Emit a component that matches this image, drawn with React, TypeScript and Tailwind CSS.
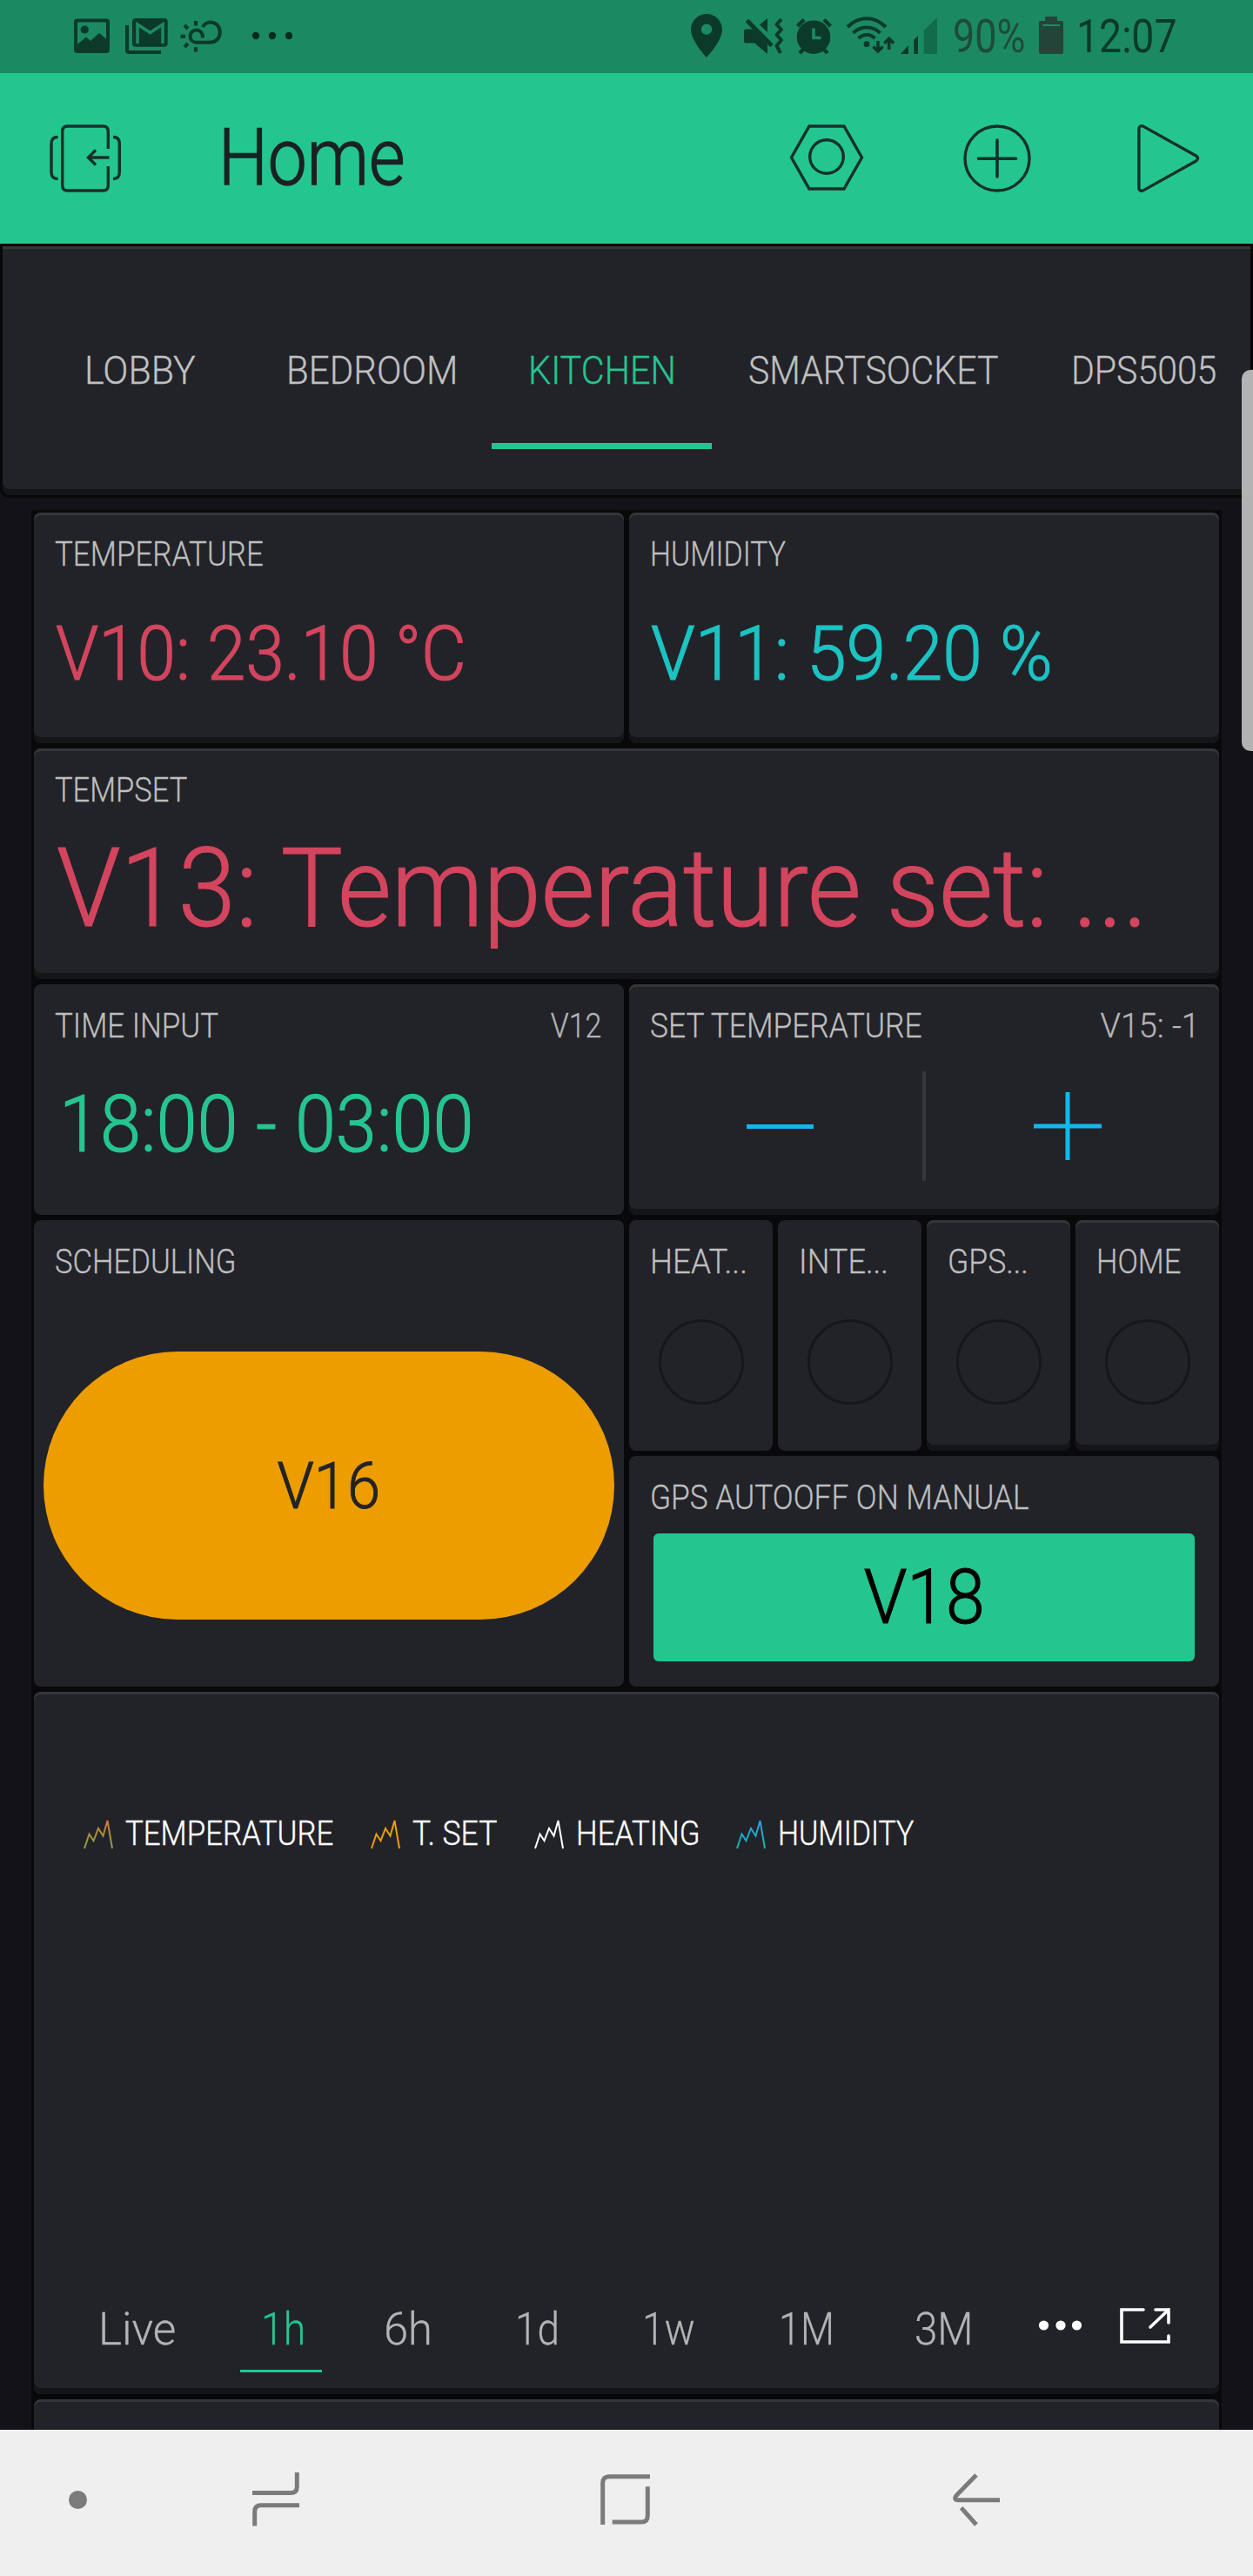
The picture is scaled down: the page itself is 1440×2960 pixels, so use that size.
import type { ReactNode } from "react";
import clsx from "clsx";

function Text({ className, children }: { className?: string; children: ReactNode }) {
  return <span className={clsx("block w-max whitespace-nowrap leading-none", className)}>{children}</span>;
}

function Icon({ w, h, className, children }: { w: number; h: number; className?: string; children: ReactNode }) {
  return (
    <svg width={w} height={h} viewBox={`0 0 ${w} ${h}`} fill="none" className={clsx("shrink-0 overflow-visible", className)}>
      {children}
    </svg>
  );
}

function StatusBar() {
  return (
    <div className="flex h-[84px] shrink-0 items-center bg-[#1b8a63] text-[#0b3a2a]">
      <Icon w={42} h={44} className="ml-[85px]">
        <rect x="2" y="3.5" width="37" height="35.5" rx="2" stroke="currentColor" strokeWidth="4" />
        <circle cx="12.3" cy="14" r="4.6" fill="currentColor" />
        <path d="M4 31L14 22.5L19 27L29 18L38 25.5V39H3Z" fill="currentColor" />
      </Icon>
      <Icon w={49} h={44} className="ml-[17px]">
        <path d="M2 9V38Q2 40 4 40H41" stroke="currentColor" strokeWidth="4" />
        <rect x="8" y="1" width="40.7" height="32.7" rx="4" fill="currentColor" />
        <path d="M14 30V8L28.5 17.5L43 8V30" stroke="#1b8a63" strokeWidth="3.6" />
      </Icon>
      <Icon w={48} h={44} className="ml-[14px]">
        <path
          d="M26 23.5C26 17 22.5 14.5 19 14.5C14.5 14.5 11.5 18 11.5 21.5C11.5 26 15 28.8 19 28.8H34C41 28.8 45.8 24 45.8 17C45.8 10 41 5.5 34.5 5.5C31 5.5 28 7.5 26 11"
          stroke="currentColor"
          strokeWidth="4"
        />
        <path d="M18 4V9.5M.5 21.8H6M5 9L9 13M5 34L9 30M18 34V39.5" stroke="currentColor" strokeWidth="4.2" />
      </Icon>
      <Icon w={46} h={44} className="ml-[35px] text-[#082a1e]">
        <circle cx="4" cy="21" r="4.2" fill="currentColor" />
        <circle cx="23" cy="21" r="4.2" fill="currentColor" />
        <circle cx="42" cy="21" r="4.2" fill="currentColor" />
      </Icon>

      <Icon w={36} h={52} className="ml-[458px]">
        <path
          fillRule="evenodd"
          d="M18 0C8 0 0 8 0 18C0 31 18 50 18 50S36 31 36 18C36 8 28 0 18 0ZM18 11.5A6.2 6.2 0 1 1 18 23.9A6.2 6.2 0 1 1 18 11.5Z"
          fill="currentColor"
        />
      </Icon>
      <Icon w={45} h={44} className="ml-[25px]">
        <path d="M2 13.5H10L27 30.5V42L12 29.5H2Q0 29.5 0 27.5V15.5Q0 13.5 2 13.5ZM18 8.5L27 1V17Z" fill="currentColor" />
        <path d="M3.5 3.5L32 32.5" stroke="currentColor" strokeWidth="5" />
        <path d="M43 2L37.5 8L43 14L37.5 20L43 26L37.5 32.5L42 41" stroke="currentColor" strokeWidth="4" strokeLinejoin="round" />
      </Icon>
      <Icon w={41} h={44} className="ml-[15px]">
        <circle cx="20" cy="22.7" r="19.3" fill="currentColor" />
        <path d="M1.5 10L9 2.5M39.5 10L32 2.5M4 41L11 34M36 41L29 34" stroke="currentColor" strokeWidth="4.4" />
        <path d="M20 12.5V23.5H28.5" stroke="#1b8a63" strokeWidth="3.6" />
      </Icon>
      <Icon w={56} h={44} className="ml-[16px]">
        <path d="M2 11C15 -2 33 -2 46 11M8.5 17.8C17 9.3 31 9.3 39.5 17.8M14.5 24C20 18.5 28 18.5 33.5 24" stroke="currentColor" strokeWidth="4" />
        <circle cx="24" cy="30.7" r="3.4" fill="currentColor" />
        <path d="M37 27V39M31.5 33.5L37 39L42.5 33.5M49.7 37V24.5M44.2 29.8L49.7 24.3L55.2 29.8" stroke="currentColor" strokeWidth="3.6" />
      </Icon>
      <Icon w={42} h={44} className="ml-[7px]">
        <path d="M0 42L9 32V42ZM15.3 25.7L20 21V42H15.3Z" fill="currentColor" />
        <path d="M26.7 15L42 0V42H26.7Z" fill="#126b4a" />
      </Icon>
      <Text className="ml-[18px] origin-left scale-x-[.832] text-[54px] text-[#1f4b3b]">90%</Text>
      <Icon w={28} h={44} className="-ml-px text-[#24443a]">
        <path d="M7 0Q7 -1 8 -1H20Q21 -1 21 0V4H26Q28 4 28 6V40Q28 42 26 42H2Q0 42 0 40V6Q0 4 2 4H7Z" fill="currentColor" />
        <path d="M4.5 9H24" stroke="#1b8a63" strokeWidth="2" />
      </Icon>
      <Text className="ml-[15px] origin-left scale-x-[.859] text-[54px]">12:07</Text>
    </div>
  );
}

function AppBar() {
  return (
    <div className="flex h-[196px] shrink-0 items-center bg-[#24c68f] text-[#15302a]">
      <Icon w={84} h={80} className="ml-[56px]">
        <g stroke="currentColor" strokeWidth="3.4">
          <path d="M68.3 29V9Q68.3 3 62.5 3H21.5Q15.7 3 15.7 9V71Q15.7 77 21.5 77H62.5Q68.3 77 68.3 71V49" />
          <path d="M10.5 15.5Q3 15.5 3 23V56Q3 63.5 10.5 63.5M74 15.5Q81.3 15.5 81.3 23V56Q81.3 63.5 74 63.5" />
          <path d="M69.5 39H46M54 30.5L45.5 39L54 47.5" />
        </g>
      </Icon>
      <div className="ml-[111px] grow">
        <Text className="origin-left scale-x-[.892] text-[90px] font-light text-[#1b2023] [-webkit-text-stroke:1.4px]">Home</Text>
      </div>
      <Icon w={86} h={80}>
        <path d="M23 3H63L83.5 39L63 75H23L2.5 39Z" stroke="currentColor" strokeWidth="3.4" />
        <circle cx="43" cy="38" r="19.3" stroke="currentColor" strokeWidth="3.4" />
      </Icon>
      <Icon w={80} h={80} className="ml-[113px]">
        <circle cx="40" cy="40" r="37" stroke="currentColor" strokeWidth="3.4" />
        <path d="M18.5 40.2H61.5M40 19V61" stroke="currentColor" strokeWidth="3.6" strokeLinecap="round" />
      </Icon>
      <Icon w={74} h={80} className="ml-[119px] mr-[61px]">
        <path
          d="M3.9 6.5V73.5C3.9 77.2 6.8 78.2 9.3 76.6L69.5 43C72.2 41.4 72.2 38.6 69.5 37L9.3 3.4C6.8 1.8 3.9 2.8 3.9 6.5Z"
          stroke="currentColor"
          strokeWidth="3.4"
        />
      </Icon>
    </div>
  );
}

const tabs = [
  { name: "LOBBY", box: "w-[232px]", text: "scale-x-[.956]" },
  { name: "BEDROOM", box: "w-[278px]", text: "scale-x-[.935]" },
  { name: "KITCHEN", box: "w-[253px]", text: "scale-x-[.92]", active: true },
  { name: "SMARTSOCKET", box: "w-[371px]", text: "scale-x-[.912]" },
  { name: "DPS5005", box: "w-[245px]", text: "scale-x-[.911]" },
];

function TabStrip() {
  return (
    <div className="h-[292px] shrink-0 rounded-b-[10px] bg-[#08080a] p-[3px]">
      <div className="flex h-[286px] overflow-hidden rounded-b-[8px] bg-[#222328] pl-[52px] pt-[120px] shadow-[inset_0_3px_0_#35363a,inset_0_-7px_0_#141516]">
        {tabs.map((t) => (
          <div key={t.name} className={clsx("flex shrink-0 flex-col", t.box)}>
            <Text
              className={clsx(
                "ml-[42px] origin-left text-[45px] font-light [-webkit-text-stroke:.3px]",
                t.text,
                t.active ? "text-[#26c590]" : "text-[#c0c0c1]",
              )}
            >
              {t.name}
            </Text>
            {t.active && <div className="mt-[61px] h-[7px] bg-[#24c68f]" />}
          </div>
        ))}
      </div>
    </div>
  );
}

function Card({
  className,
  title,
  titleClass,
  pin,
  pinClass,
  raised,
  children,
}: {
  className: string;
  title?: string;
  titleClass?: string;
  pin?: string;
  pinClass?: string;
  raised?: boolean;
  children?: ReactNode;
}) {
  return (
    <div
      className={clsx(
        "flex min-w-0 flex-col overflow-hidden rounded-[8px] bg-[#222328]",
        raised && "shadow-[inset_0_3px_0_#35363a,inset_0_-7px_0_#141516]",
        className,
      )}
    >
      {title && (
        <div className="flex h-[67px] justify-between pl-6 pr-[26px] pt-[29px] text-[39px] font-light text-[#bebebf] [-webkit-text-stroke:.3px]">
          <Text className={clsx("origin-left", titleClass)}>{title}</Text>
          {pin && <Text className={clsx("origin-right text-[#b4b4b5]", pinClass)}>{pin}</Text>}
        </div>
      )}
      {children}
    </div>
  );
}

const switches = [
  { name: "HEAT...", text: "scale-x-[.942]", raised: false },
  { name: "INTE...", text: "scale-x-[.927]", raised: false },
  { name: "GPS...", text: "scale-x-[.91]", raised: true },
  { name: "HOME", text: "scale-x-[.885]", raised: true },
];

const legend = [
  { name: "TEMPERATURE", from: "#e0703c", to: "#6fae45", box: "w-[330px]", text: "scale-x-[.893]" },
  { name: "T. SET", from: "#ed9d00", to: "#ed9d00", box: "w-[188px]", text: "scale-x-[.91]" },
  { name: "HEATING", from: "#ffffff", to: "#ffffff", box: "w-[232px]", text: "scale-x-[.893]" },
  { name: "HUMIDITY", from: "#2a9be8", to: "#17b3b0", box: "w-[240px]", text: "scale-x-[.87]" },
];

const ranges = [
  { name: "Live", box: "w-[187px]", text: "scale-x-[.985]" },
  { name: "1h", box: "w-[141px]", text: "scale-x-[.893]", active: true },
  { name: "6h", box: "w-[151px]", text: "scale-x-[.975]" },
  { name: "1d", box: "w-[146px]", text: "scale-x-[.883]" },
  { name: "1w", box: "w-[157px]", text: "scale-x-[.891]" },
  { name: "1M", box: "w-[156px]", text: "scale-x-[.866]" },
  { name: "3M", box: "w-[143px]", text: "scale-x-[.914]" },
];

function ChartCard() {
  return (
    <Card className="col-span-8 row-span-3" raised>
      <div className="flex pl-[57px] pt-[144px]">
        {legend.map((l, i) => (
          <div key={l.name} className={clsx("flex items-center gap-[14px]", l.box)}>
            <Icon w={34} h={34}>
              <defs>
                <linearGradient id={`series-${i}`} x1="0" y1="0" x2="0" y2="34" gradientUnits="userSpaceOnUse">
                  <stop stopColor={l.from} />
                  <stop offset="1" stopColor={l.to} />
                </linearGradient>
              </defs>
              <path d="M1 33L6.5 16.5L11.5 24L17 10L22.5 18.5L27.5 1L33 33" stroke={`url(#series-${i})`} strokeWidth="2" />
            </Icon>
            <Text className={clsx("origin-left text-[39px] font-light text-white [-webkit-text-stroke:.4px]", l.text)}>{l.name}</Text>
          </div>
        ))}
      </div>
      <div className="mt-auto flex h-[101px] items-start pl-[74px]">
        {ranges.map((r) => (
          <div key={r.name} className={clsx("shrink-0", r.box)}>
            <Text
              className={clsx(
                "mt-px origin-left text-[52px] font-light [-webkit-text-stroke:.3px]",
                r.text,
                r.active ? "text-[#26c590]" : "text-[#b4b4b5]",
              )}
            >
              {r.name}
            </Text>
            {r.active && <div className="-ml-6 mt-[20px] h-[3px] w-[94px] bg-[#24c68f]" />}
          </div>
        ))}
        <Icon w={50} h={12} className="mt-[16px]">
          <circle cx="5.5" cy="6" r="5.6" fill="#fff" />
          <circle cx="25" cy="6" r="5.6" fill="#fff" />
          <circle cx="43.5" cy="6" r="5.6" fill="#fff" />
        </Icon>
        <Icon w={58} h={41} className="ml-[43px] mt-[2px]">
          <path d="M27 2H2V39H56V32M41 2H56V17M56 2L35 22" stroke="#fff" strokeWidth="3.6" strokeLinecap="round" />
        </Icon>
      </div>
    </Card>
  );
}

function Dashboard() {
  return (
    <div className="mx-9 mt-[14px] min-h-0 grow overflow-hidden bg-[#09090b] px-[3px] pt-[3px]">
      <div className="grid auto-rows-[265px] grid-cols-8 gap-[6px]">
        <Card className="col-span-4" title="TEMPERATURE" titleClass="scale-x-[.895]" raised>
          <Text className="ml-[25px] mt-[52px] origin-left scale-x-[.918] text-[87px] font-light text-[#d3455e] [-webkit-text-stroke:1.2px]">
            V10: 23.10 °C
          </Text>
        </Card>
        <Card className="col-span-4" title="HUMIDITY" titleClass="scale-x-[.868]" raised>
          <Text className="ml-[25px] mt-[52px] origin-left scale-x-[.944] text-[87px] font-light text-[#1bc3c2] [-webkit-text-stroke:1.2px]">
            V11: 59.20 %
          </Text>
        </Card>
        <Card className="col-span-8" title="TEMPSET" titleClass="scale-x-[.884]" raised>
          <Text className="ml-[26px] mt-[31px] origin-left scale-x-[.942] text-[126.6px] font-light text-[#d3455e] [-webkit-text-stroke:1.2px]">
            V13: Temperature set: ...
          </Text>
        </Card>
        <Card className="col-span-4" title="TIME INPUT" titleClass="scale-x-[.895]" pin="V12" pinClass="scale-x-[.87]">
          <Text className="ml-[29px] mt-[50px] origin-left scale-x-[.94] text-[90px] font-light text-[#26c590] [-webkit-text-stroke:1.2px]">
            18:00 - 03:00
          </Text>
        </Card>
        <Card
          className="col-span-4"
          title="SET TEMPERATURE"
          titleClass="scale-x-[.906]"
          pin="V15: -1"
          pinClass="scale-x-[.97] -mr-[4px]"
          raised
        >
          <div className="mt-[33px] flex h-[126px] items-center px-[11px]">
            <div className="flex grow justify-center">
              <div className="h-[5px] w-[77px] bg-[#0fb9ee]" />
            </div>
            <div className="h-full w-1 bg-[#37383b]" />
            <div className="flex grow justify-center">
              <Icon w={78} h={78}>
                <path d="M0 39H78M39 0V78" stroke="#0fb9ee" strokeWidth="5" />
              </Icon>
            </div>
          </div>
        </Card>
        <Card className="col-span-4 row-span-2" title="SCHEDULING" titleClass="scale-x-[.888]">
          <div className="mx-[11px] mt-[84px] flex h-[308px] items-center justify-center rounded-full bg-[#ed9d00]">
            <Text className="scale-x-[.915] text-[75px] font-light text-[#232323] [-webkit-text-stroke:1px]">V16</Text>
          </div>
        </Card>
        {switches.map((s) => (
          <Card key={s.name} className="col-span-1" title={s.name} titleClass={s.text} raised={s.raised}>
            <div className="mt-[47px] size-[98px] self-center rounded-full border-[3px] border-[#16171b]" />
          </Card>
        ))}
        <Card className="col-span-4" title="GPS AUTOOFF ON MANUAL" titleClass="scale-x-[.904]">
          <div className="mx-7 mt-[22px] flex h-[147px] items-center justify-center rounded-[6px] bg-[#24c68f]">
            <Text className="scale-x-[.925] text-[87px] font-light text-black [-webkit-text-stroke:1.2px]">V18</Text>
          </div>
        </Card>
        <ChartCard />
        <Card className="col-span-8" raised />
      </div>
    </div>
  );
}

function NavBar() {
  return (
    <div className="flex h-[168px] shrink-0 items-center bg-[#efefef] pb-2 text-[#7b7b7b]">
      <div className="ml-[79px] size-[21px] rounded-full bg-[#7b7b7b]" />
      <Icon w={54} h={62} className="ml-[190px]">
        <path d="M0 23.5H44Q51.3 23.5 51.3 16.5V0M54 37.7H10Q2.7 37.7 2.7 45V61.5" stroke="currentColor" strokeWidth="5" />
      </Icon>
      <Icon w={57} h={58} className="ml-[346px]">
        <path d="M2.7 58V10Q2.7 2.8 10 2.8H57M13.7 55H47Q54.3 55 54.3 48V14.3" stroke="currentColor" strokeWidth="5" />
      </Icon>
      <Icon w={54} h={61} className="ml-[348px]">
        <path d="M27 2L3.8 25.8Q0.8 30.7 6 30.7H54M9.7 39.7L27 59" stroke="currentColor" strokeWidth="5" />
      </Icon>
    </div>
  );
}

export default function App() {
  return (
    <div className="relative flex h-[2960px] w-[1440px] flex-col overflow-hidden bg-[#131218] font-[Roboto,sans-serif]">
      <StatusBar />
      <AppBar />
      <TabStrip />
      <Dashboard />
      <NavBar />
      <div className="absolute right-0 top-[425px] h-[438px] w-[13px] rounded-l-[10px] bg-[#bcbcbc]/95" />
    </div>
  );
}
